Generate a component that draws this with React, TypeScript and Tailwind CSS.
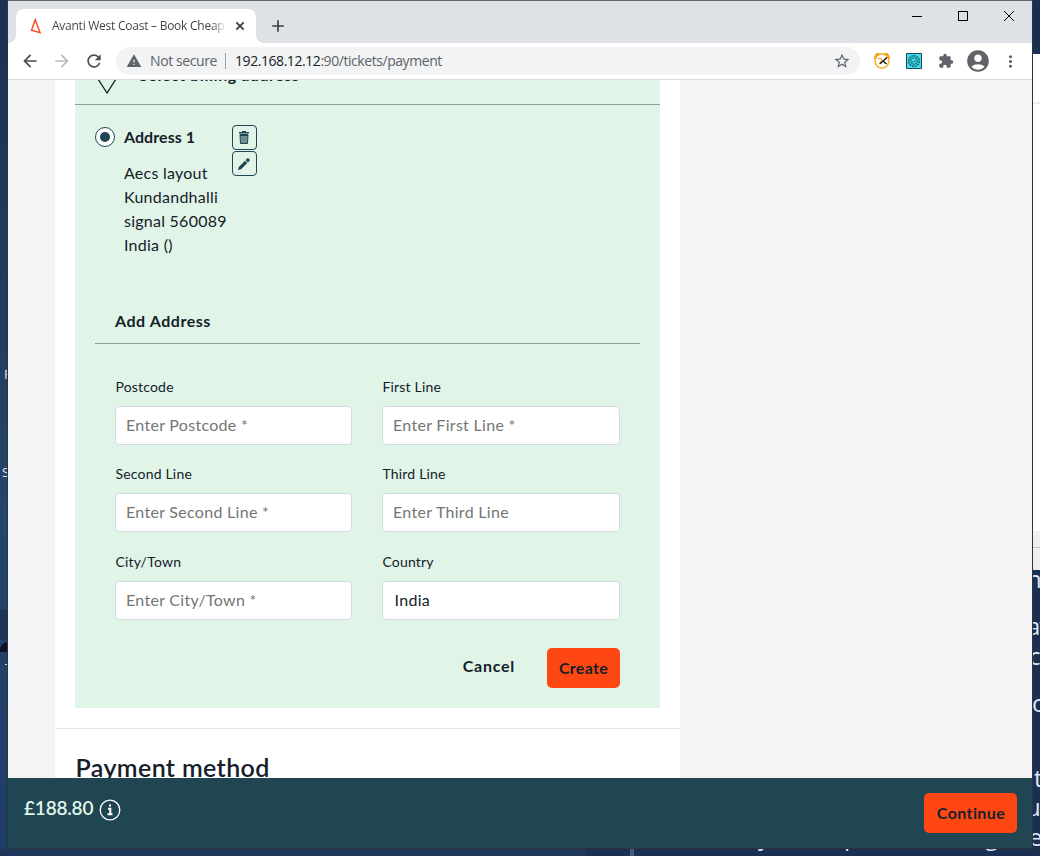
import React from 'react';
import { MdRefresh, MdArrowBack, MdArrowForward, MdStarBorder, MdExtension, MdAccountCircle, MdMoreVert, MdWarning, MdAdd } from 'react-icons/md';

function BackText({ className, children }: { className: string; children: React.ReactNode }) {
  return (
    <span className={`absolute whitespace-nowrap font-['Open_Sans',sans-serif] leading-none text-[#dce9fa] ${className}`}>
      {children}
    </span>
  );
}

function Desktop() {
  return (
    <>
      <div className="absolute left-0 top-0 h-full w-2 bg-linear-to-b from-[#1c2f54] via-[#24466a] via-60% to-[#203c68]" />
      <div className="absolute left-0 top-[610px] h-[30px] w-2 bg-[#1f3558]" />
      <div className="absolute left-0 top-[642px] h-2.5 w-2 rounded-tl-full bg-[#091329]" />
      <BackText className="left-[4px] top-[368px] text-[13px]">R</BackText>
      <BackText className="left-[2px] top-[466px] text-[13px]">S</BackText>
      <BackText className="left-[5px] top-[662px] text-[13px]">T</BackText>
      <div className="absolute left-[1032px] top-[54px] h-[477px] w-2 bg-white" />
      <div className="absolute left-[1032px] top-[102px] h-0.5 w-2 bg-[#ececec]" />
      <div className="absolute left-[1032px] top-[531px] h-[39px] w-2 bg-[#f0f0f0]" />
      <div className="absolute left-[1032px] top-[547px] h-px w-2 bg-[#c8c8c8]" />
      <BackText className="left-[1027px] top-[567px] text-[24px]">n</BackText>
      <BackText className="left-[1027px] top-[614px] text-[24px] tracking-[-1px]">at</BackText>
      <BackText className="left-[1029px] top-[644px] text-[24px]">c</BackText>
      <BackText className="left-[1032px] top-[691px] text-[24px]">c</BackText>
      <BackText className="left-[1034px] top-[766px] text-[24px]">t</BackText>
      <BackText className="left-[1026px] top-[795px] text-[24px]">u</BackText>
      <BackText className="left-[1029px] top-[825px] text-[24px]">e</BackText>
      <BackText className="left-[758px] top-[824px] text-[24px]">y</BackText>
      <BackText className="left-[844px] top-[824px] text-[24px]">p</BackText>
      <BackText className="left-[985px] top-[824px] text-[24px]">g</BackText>
      <div className="absolute left-[630px] top-[849px] h-[7px] w-1 bg-[#455b7a]" />
      <div className="absolute left-0 top-[849px] h-[7px] w-[586px] bg-[#1f365b]" />
    </>
  );
}

function TabStrip() {
  return (
    <div className="flex h-[42px] items-end bg-[#dee1e6]">
      <div className="relative ml-2 flex h-[34px] w-[240px] items-center rounded-t-lg bg-white pl-3">
        <svg className="absolute -left-2 bottom-0 size-2" viewBox="0 0 8 8"><path d="M8 0V8H0A8 8 0 0 0 8 0Z" fill="#fff" /></svg>
        <svg className="absolute -right-2 bottom-0 size-2" viewBox="0 0 8 8"><path d="M0 0V8H8A8 8 0 0 1 0 0Z" fill="#fff" /></svg>
        <svg className="size-4" viewBox="0 0 16 16"><path d="M7.2 1.8 12 14.6 3.6 12.3Z" fill="none" stroke="#fc4c24" strokeWidth="1.5" /></svg>
        <span className="ml-2 w-[174px] overflow-hidden bg-linear-to-r from-[#3c4043] from-92% to-transparent bg-clip-text whitespace-nowrap font-['Open_Sans',sans-serif] text-[12px] tracking-[-0.25px] text-transparent">
          Avanti West Coast – Book Cheap
        </span>
        <svg className="ml-1.5 size-4" viewBox="0 0 16 16"><path d="M4.3 4.3 11.7 11.7M11.7 4.3 4.3 11.7" stroke="#3c4043" strokeWidth="1.8" /></svg>
      </div>
      <MdAdd className="mb-[7px] ml-[12px] size-5 text-[#3c4043]" />
      <svg className="mb-[20px] ml-auto mr-[14px] h-[14px] w-[106px]" viewBox="0 0 106 14" fill="none" stroke="#000" shapeRendering="crispEdges">
        <path d="M0 7.5H10M46.5 2.5H55.5V11.5H46.5Z" />
        <path d="M92 2 102 12M102 2 92 12" shapeRendering="auto" />
      </svg>
    </div>
  );
}

function Toolbar() {
  return (
    <div className="flex h-[37px] items-center border-b border-[#dadce0] bg-white text-[#5f6368]">
      <MdArrowBack className="ml-3 size-5 text-[#4b4f54]" />
      <MdArrowForward className="ml-3 size-5 text-[#bababd]" />
      <MdRefresh className="ml-3 size-5 text-[#4b4f54]" />
      <div className="ml-3 flex h-7 w-[744px] items-center rounded-full bg-[#f1f3f4] pl-2.5 font-['Open_Sans',sans-serif] text-[14px] leading-5">
        <MdWarning className="size-4" />
        <span className="ml-2 w-[67px] whitespace-nowrap tracking-[-0.4px]">Not secure</span>
        <span className="mx-2 h-4 w-px bg-[#9aa0a6]" />
        <span className="ml-px whitespace-nowrap tracking-[-0.44px]">
          <span className="text-[#202124]">192.168.12.12</span>:90/tickets/payment
        </span>
        <MdStarBorder className="ml-auto mr-[9px] size-[18px]" />
      </div>
      <svg className="ml-3.5 size-4" viewBox="0 0 16 16">
        <circle cx="8" cy="8" r="7" fill="#fff" stroke="#f9b234" strokeWidth="1.6" />
        <path d="M1 6A7 7 0 0 1 15 6" fill="none" stroke="#f59b08" strokeWidth="2" />
        <path d="M4 5.5H7L8.5 8 5 10.5" fill="none" stroke="#f59b08" strokeWidth="1.2" />
        <path d="M13 4.5 6 10.8M9.5 8.5 12.5 11" stroke="#111" strokeWidth="1.4" />
      </svg>
      <svg className="ml-4 size-4" viewBox="0 0 16 16">
        <path d="M.5.5H15.5V15.5H.5Z" fill="#3fdfee" stroke="#174754" />
        <circle cx="8" cy="8" r="5.3" fill="none" stroke="#17616d" strokeWidth="1.5" strokeDasharray="2 .7" />
        <circle cx="8" cy="8" r="3.3" fill="none" stroke="#17616d" />
        <path d="m6.3 8 1.2 1.3L10 6.8" fill="none" stroke="#17616d" />
      </svg>
      <MdExtension className="ml-4 size-4" />
      <MdAccountCircle className="ml-[11px] size-[26px]" />
      <MdMoreVert className="ml-[10px] size-[19px]" />
    </div>
  );
}

function Field({ label, placeholder, value }: { label: string; placeholder?: string; value?: string }) {
  return (
    <label className="flex flex-col">
      <span className="h-[29px] pl-[0.4px] text-[14px] leading-5 tracking-[0.2px]">{label}</span>
      <input
        className={`h-[39px] w-full rounded border border-[#d2dbe2] bg-white pb-0.5 text-[16px] tracking-[0.3px] placeholder:text-[#757575] ${value ? 'px-[11.5px]' : 'px-2.5'}`}
        placeholder={placeholder}
        defaultValue={value}
      />
    </label>
  );
}

function IconButton({ children }: { children: React.ReactNode }) {
  return <button className="flex size-[25px] items-center justify-center rounded border border-[#204553]">{children}</button>;
}

function BillingAddress() {
  return (
    <section className="ml-5 h-[628px] w-[585px] bg-[#e0f5e8]">
      <header className="flex h-[25px] items-end overflow-hidden border-b border-[#84a39e]">
        <svg className="mb-2.5 ml-5 h-[34px] w-6" viewBox="0 0 24 34" fill="none" stroke="#14222b" strokeWidth="1.3">
          <path d="M12 33 3 19C0 10 4 2 12 2S24 10 21 19Z" />
        </svg>
        <h3 className="mb-[17px] ml-5 text-[16px] font-bold leading-6 tracking-[0.55px]">Select billing address</h3>
      </header>
      <div className="flex pl-5 pt-5">
        <span className="mt-[2px] flex size-5 items-center justify-center rounded-full border border-[#204553] bg-white">
          <span className="size-2.5 rounded-full bg-[#204553]" />
        </span>
        <div className="ml-[9px] w-[108px]">
          <h4 className="text-[16px] font-bold leading-6 tracking-[0.05px]">Address 1</h4>
          <p className="mt-3 whitespace-pre text-[16px] leading-6 tracking-[0.25px]">{'Aecs layout\nKundandhalli\nsignal 560089\nIndia ()'}</p>
        </div>
        <div className="flex flex-col gap-px">
          <IconButton>
            <svg className="mr-px h-[15px] w-3" viewBox="0 0 12 15">
              <path d="M1 2H4V1H8V2H11V3.5H1Z" fill="#204553" />
              <path d="M2 4.5H10L9.5 13.5H2.5Z" fill="#6f8f94" stroke="#204553" />
              <path d="M2 4H10V6H2Z" fill="#204553" />
            </svg>
          </IconButton>
          <IconButton>
            <svg className="mr-px size-3" viewBox="0 0 12 12" fill="#204553">
              <path d="M0 12 .8 8.9 7 2.7 9.3 5 3.1 11.2ZM7.6 2.1 9.1.6Q9.9-.2 10.8.6L11.4 1.2Q12.2 2.1 11.4 2.9L9.9 4.4Z" />
            </svg>
          </IconButton>
        </div>
      </div>
      <form className="mx-5 mt-[48px]">
        <h4 className="h-[39px] border-b border-[#84a39e] pl-5 pt-[4px] text-[16px] font-bold leading-6 tracking-[0.55px]">Add Address</h4>
        <div className="mx-5 mt-[33px] grid grid-cols-[237px_238px] gap-x-[30px] gap-y-[19.4px]">
          <Field label="Postcode" placeholder="Enter Postcode *" />
          <Field label="First Line" placeholder="Enter First Line *" />
          <Field label="Second Line" placeholder="Enter Second Line *" />
          <Field label="Third Line" placeholder="Enter Third Line" />
          <Field label="City/Town" placeholder="Enter City/Town *" />
          <Field label="Country" value="India" />
        </div>
        <div className="mr-5 mt-[28.2px] flex justify-end gap-8 text-[16px] font-bold">
          <button type="button" className="h-[36px] tracking-[0.75px]">Cancel</button>
          <button type="button" className="h-10 w-[73px] rounded-[5px] bg-[#ff4713] tracking-[0.3px]">Create</button>
        </div>
      </form>
    </section>
  );
}

function SummaryBar() {
  return (
    <footer className="flex h-[70px] items-center bg-[#204553] pl-4 pr-[15px]">
      <span className="mb-[9px] w-[70px] text-[19px] font-semibold tracking-[-0.2px] text-[#e0f5e8]">£188.80</span>
      <svg className="mb-[7px] ml-[5px] size-[22px]" viewBox="0 0 22 22" fill="none" stroke="#fff" strokeWidth="1.3">
        <circle cx="11" cy="11" r="9.8" />
        <path d="M10 6.5H12M9 9.7H11.3V15M8.5 15.3H13.5" strokeWidth="2" />
      </svg>
      <button className="ml-auto h-10 w-[93px] rounded-[5px] bg-[#ff4713] pl-px text-[16px] font-bold tracking-[0.4px]">Continue</button>
    </footer>
  );
}

export default function App() {
  return (
    <div className="relative h-[856px] w-[1040px] overflow-hidden bg-[#1b2f53]">
      <Desktop />
      <div className="absolute left-[7px] top-0 flex h-[849px] w-[1026px] flex-col overflow-hidden border border-[#30343a] border-t-[#65676b] bg-white">
        <TabStrip />
        <Toolbar />
        <div className="flex min-h-0 flex-1 flex-col font-['Lato',sans-serif] text-[#15202a]">
          <main className="h-[698px] overflow-hidden bg-[#f4f4f4]">
            <div className="ml-[47px] h-full w-[625px] bg-white">
              <BillingAddress />
              <div className="mt-5 border-t border-[#e3e5e6] pl-[20.6px] pt-[22px]">
                <h2 className="text-[25px] font-semibold leading-8 tracking-[0.37px]">Payment method</h2>
              </div>
            </div>
          </main>
          <SummaryBar />
        </div>
      </div>
    </div>
  );
}
